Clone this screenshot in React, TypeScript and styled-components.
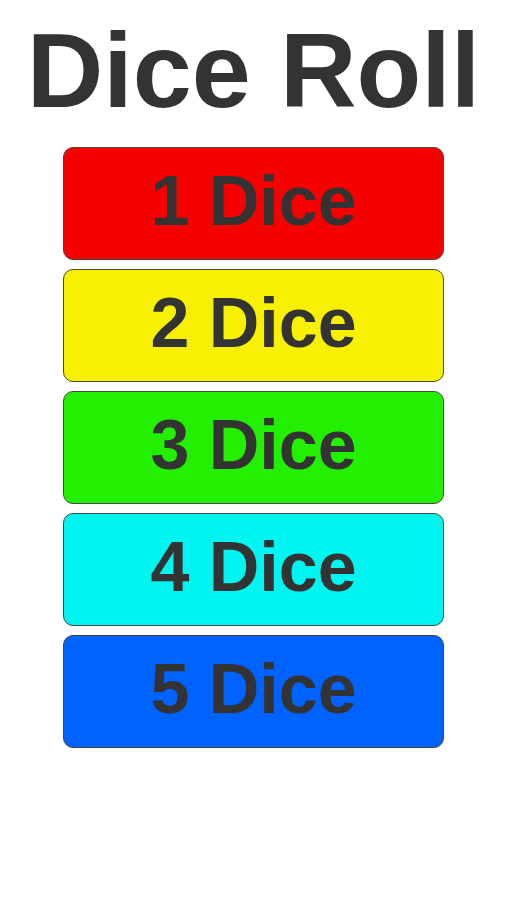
import React from "react";
import styled, { createGlobalStyle } from "styled-components";

const Global = createGlobalStyle`
  html, body { margin: 0; padding: 0; background: #ffffff; }
  body { font-family: "Liberation Sans", Arial, sans-serif; }
`;

const Page = styled.div`
  width: 507px;
  height: 900px;
  display: flex;
  flex-direction: column;
  align-items: center;
  background: #ffffff;
`;

const Title = styled.h1`
  margin: 0;
  padding-top: 11px;
  font-family: "Liberation Sans", Arial, sans-serif;
  font-weight: 700;
  font-size: 106px;
  line-height: 118px;
  color: #333333;
  letter-spacing: 0;
`;

const List = styled.div`
  margin-top: 18px;
  display: flex;
  flex-direction: column;
  gap: 9px;
`;

const DiceButton = styled.button<{ $bg: string }>`
  width: 381px;
  height: 113px;
  box-sizing: border-box;
  border: 1px solid #4a4a3a;
  border-radius: 10px;
  background: ${(p) => p.$bg};
  color: #333333;
  font-family: "Liberation Sans", Arial, sans-serif;
  font-weight: 700;
  font-size: 70px;
  line-height: 1;
  padding: 0 0 6px 0;
  display: flex;
  align-items: center;
  justify-content: center;
  cursor: pointer;
`;

const items = [
  { label: "1 Dice", bg: "#f70000" },
  { label: "2 Dice", bg: "#f7f000" },
  { label: "3 Dice", bg: "#22f000" },
  { label: "4 Dice", bg: "#00f5f0" },
  { label: "5 Dice", bg: "#0062ff" },
];

export default function App() {
  return (
    <>
      <Global />
      <Page>
        <Title>Dice Roll</Title>
        <List>
          {items.map((it) => (
            <DiceButton key={it.label} $bg={it.bg}>
              {it.label}
            </DiceButton>
          ))}
        </List>
      </Page>
    </>
  );
}
